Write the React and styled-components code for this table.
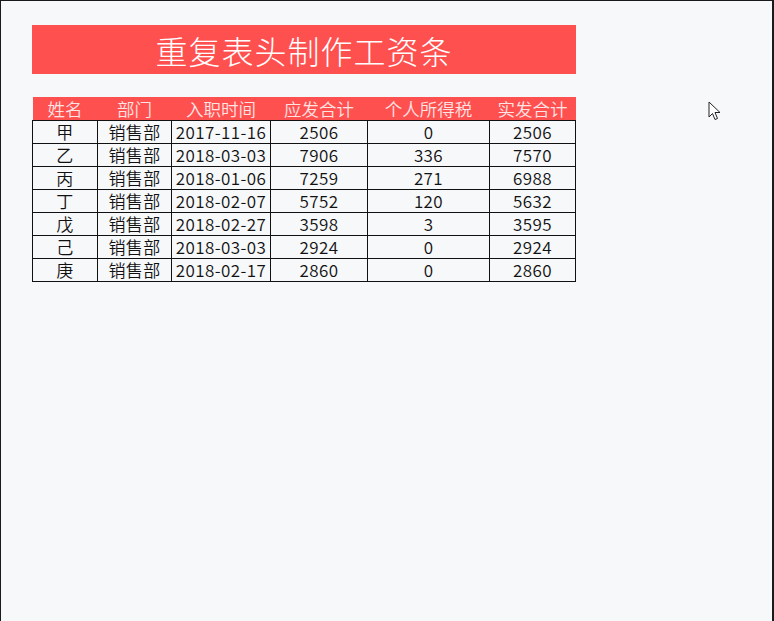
import styled, { createGlobalStyle } from "styled-components";

const GlobalStyle = createGlobalStyle`
    html, body {
        margin: 0;
        padding: 0;
        background: #f7f8fa;
    }
    body {
        font-family: "Noto Sans CJK SC", "Noto Sans", sans-serif;
    }
`;

const Frame = styled.div`
    position: relative;
    box-sizing: border-box;
    width: 774px;
    height: 621px;
    border-top: 1px solid #1a1a1a;
    border-left: 1px solid #1a1a1a;
    border-right: 2px solid #1a1a1a;
    background: #f7f8fa;
    padding: 24px 0 0 31px;
    overflow: hidden;
`;

const Title = styled.div`
    width: 544px;
    height: 49px;
    background: #ff5050;
    color: #ffffff;
    font-size: 32px;
    font-weight: 300;
    display: flex;
    align-items: center;
    justify-content: center;
    letter-spacing: 1px;
`;

const Table = styled.table`
    margin-top: 23px;
    width: 543px;
    border-collapse: collapse;
    table-layout: fixed;
`;

const HeadCell = styled.th`
    background: #ff5050;
    color: #ffe4e4;
    font-size: 17.5px;
    font-weight: 350;
    height: 23px;
    padding: 0;
    line-height: 23px;
    text-align: center;
`;

const Cell = styled.td`
    border: 1px solid #111;
    color: #111;
    font-size: 17px;
    font-weight: 350;
    letter-spacing: 0.4px;
    height: 22px;
    padding: 0;
    line-height: 22px;
    text-align: center;
    white-space: nowrap;
`;

const Cursor = styled.svg`
    position: absolute;
    left: 707px;
    top: 100px;
`;

const columns = [
    { name: "姓名", width: 65 },
    { name: "部门", width: 74 },
    { name: "入职时间", width: 99 },
    { name: "应发合计", width: 97 },
    { name: "个人所得税", width: 122 },
    { name: "实发合计", width: 86 },
];

const rows = [
    ["甲", "销售部", "2017-11-16", 2506, 0, 2506],
    ["乙", "销售部", "2018-03-03", 7906, 336, 7570],
    ["丙", "销售部", "2018-01-06", 7259, 271, 6988],
    ["丁", "销售部", "2018-02-07", 5752, 120, 5632],
    ["戊", "销售部", "2018-02-27", 3598, 3, 3595],
    ["己", "销售部", "2018-03-03", 2924, 0, 2924],
    ["庚", "销售部", "2018-02-17", 2860, 0, 2860],
];

export default function App() {
    return (
        <>
            <GlobalStyle/>
            <Frame>
                <Title>重复表头制作工资条</Title>
                <Table>
                    <colgroup>
                        {columns.map(c => <col key={c.name} style={{width: c.width}}/>)}
                    </colgroup>
                    <thead>
                    <tr>
                        {columns.map(c => <HeadCell key={c.name}>{c.name}</HeadCell>)}
                    </tr>
                    </thead>
                    <tbody>
                    {rows.map(row => (
                        <tr key={row[0]}>
                            {row.map((v, i) => <Cell key={i}>{v}</Cell>)}
                        </tr>
                    ))}
                    </tbody>
                </Table>
                <Cursor width="14" height="21" viewBox="0 0 14 21">
                    <path d="M1 1 L1 16 L4.5 12.5 L7 18.5 L9.5 17.5 L7 11.5 L12 11.5 Z"
                          fill="#fff" stroke="#222" strokeWidth="1" strokeLinejoin="miter"/>
                </Cursor>
            </Frame>
        </>
    );
}
